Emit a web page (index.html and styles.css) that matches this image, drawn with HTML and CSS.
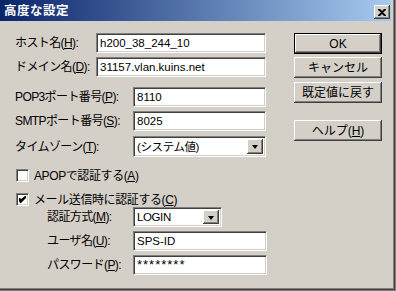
FILE: index.html
```html
<!DOCTYPE html>
<html lang="ja">
<head>
  <meta charset="UTF-8" />
  <title>高度な設定</title>
  <link rel="stylesheet" href="styles.css">
</head>
<body>
  <div class="window">
    <div class="titlebar">
      <span class="title">高度な設定</span>
      <div class="close">
        <svg width="8" height="7" viewBox="0 0 8 7"><path d="M0 0h2l2 2 2-2h2v1L5 3.5 8 6v1H6L4 5 2 7H0V6l3-2.5L0 1z" fill="#000"/></svg>
      </div>
    </div>

    <div class="content">
      <div class="form">
        <div class="row r1">
          <label class="lbl-short">ホスト名(<u>H</u>):</label>
          <div class="field wide">h200_38_244_10</div>
        </div>
        <div class="row r2">
          <label class="lbl-short">ドメイン名(<u>D</u>):</label>
          <div class="field wide">31157.vlan.kuins.net</div>
        </div>
        <div class="row r3">
          <label class="lbl-long">POP3ポート番号(<u>P</u>):</label>
          <div class="field mid">8110</div>
        </div>
        <div class="row r4">
          <label class="lbl-long">SMTPポート番号(<u>S</u>):</label>
          <div class="field mid">8025</div>
        </div>
        <div class="row r5">
          <label class="lbl-long">タイムゾーン(<u>T</u>):</label>
          <div class="field mid combo"><span class="combo-text">(システム値)</span><span class="drop"><i class="arrow"></i></span></div>
        </div>
        <div class="check c1">
          <span class="box"></span>
          <span>APOPで認証する(<u>A</u>)</span>
        </div>
        <div class="check c2">
          <span class="box"><svg width="7" height="7" viewBox="0 0 7 7"><path d="M0 2h1l1 1 4-3h1v2L2 7H1L0 5z" fill="#000"/></svg></span>
          <span>メール送信時に認証する(<u>C</u>)</span>
        </div>
        <div class="row r8 sub">
          <label class="lbl-sub">認証方式(<u>M</u>):</label>
          <div class="field small combo"><span class="combo-text">LOGIN</span><span class="drop"><i class="arrow"></i></span></div>
        </div>
        <div class="row r9 sub">
          <label class="lbl-sub">ユーザ名(<u>U</u>):</label>
          <div class="field mid2">SPS-ID</div>
        </div>
        <div class="row r10 sub">
          <label class="lbl-sub">パスワード(<u>P</u>):</label>
          <div class="field mid2 pass">********</div>
        </div>
      </div>

      <div class="buttons">
        <div class="btn default">OK</div>
        <div class="btn b2">キャンセル</div>
        <div class="btn b3">既定値に戻す</div>
        <div class="btn b4">ヘルプ(<u>H</u>)</div>
      </div>
    </div>
  </div>
</body>
</html>
```

FILE: styles.css
```css
body { margin: 0; padding: 0; background: #d4d0c8; font-family: "Liberation Sans", "Noto Sans CJK JP", sans-serif; font-size: 12px; color: #000; }
u { text-decoration: underline; text-underline-offset: 1px; }

.window { width: 396px; height: 291px; box-sizing: border-box; background: #d4d0c8; border-right: 1px solid #808080; border-bottom: 1px solid #808080; box-shadow: inset -1px -1px #404040, inset -2px -2px #808080; overflow: hidden; }

.titlebar { height: 21px; margin-right: 4px; background: linear-gradient(to right, #0a246a, #a6caf0); display: flex; align-items: center; justify-content: space-between; }
.title { color: #fff; font-weight: bold; font-size: 12.5px; padding-left: 4px; letter-spacing: 0.5px; line-height: 14px; margin-top: 1px; }
.close { width: 16px; height: 14px; margin: 3px 1px 0 0; box-sizing: border-box; background: #d4d0c8; box-shadow: inset -1px -1px #404040, inset 1px 1px #fff, inset -2px -2px #808080; display: flex; align-items: center; justify-content: center; }

.content { display: flex; padding-top: 12px; }
.form { width: 294px; padding-left: 15px; box-sizing: border-box; }

.row { display: flex; align-items: center; height: 20px; }
.row label { line-height: 14px; white-space: nowrap; letter-spacing: -0.6px; }
.lbl-short { width: 81px; }
.lbl-long { width: 118px; }
.lbl-sub { width: 86px; padding-left: 32px; }

.r2, .r4, .r9, .r10 { margin-top: 4px; }
.r3 { margin-top: 10px; }
.r5 { margin-top: 5px; height: 21px; }
.r8 { margin-top: 1px; }

.field { height: 100%; box-sizing: border-box; background: #fff; border: 1px solid; border-color: #808080 #fff #fff #808080; box-shadow: inset 1px 1px #404040, inset -1px -1px #d4d0c8; padding: 0 3px; display: flex; align-items: center; white-space: nowrap; overflow: hidden; line-height: 14px; font-size: 11.5px; }
.wide { width: 170px; }
.mid { width: 133px; }
.mid2 { width: 134px; }
.small { width: 89px; }
.pass { font-size: 13px; letter-spacing: 1px; }

.combo { padding: 2px 2px 2px 3px; justify-content: space-between; }
.combo-text { flex: 1; letter-spacing: -0.4px; }
.drop { width: 16px; height: 100%; box-sizing: border-box; background: #d4d0c8; box-shadow: inset -1px -1px #404040, inset 1px 1px #fff, inset -2px -2px #808080, inset 2px 2px #d4d0c8; display: flex; align-items: center; justify-content: center; }
.arrow { width: 0; height: 0; border-left: 3.5px solid transparent; border-right: 3.5px solid transparent; border-top: 4px solid #000; margin-top: 1px; }

.check { display: flex; align-items: center; height: 13px; padding-left: 1px; gap: 5px; line-height: 14px; letter-spacing: -0.4px; }
.c1 { margin-top: 12px; }
.c2 { margin-top: 11px; }
.box { width: 13px; height: 13px; box-sizing: border-box; background: #fff; border: 1px solid; border-color: #808080 #fff #fff #808080; box-shadow: inset 1px 1px #404040, inset -1px -1px #d4d0c8; display: flex; align-items: center; justify-content: center; }

.buttons { width: 88px; display: flex; flex-direction: column; }
.btn { height: 21px; box-sizing: border-box; display: flex; align-items: center; justify-content: center; background: #d4d0c8; box-shadow: inset -1px -1px #404040, inset 1px 1px #fff, inset -2px -2px #808080, inset 2px 2px #d4d0c8; line-height: 14px; }
.default { border: 1px solid #000; }
.b2 { margin-top: 3px; }
.b3 { margin-top: 4px; }
.b4 { margin-top: 17px; }
```
